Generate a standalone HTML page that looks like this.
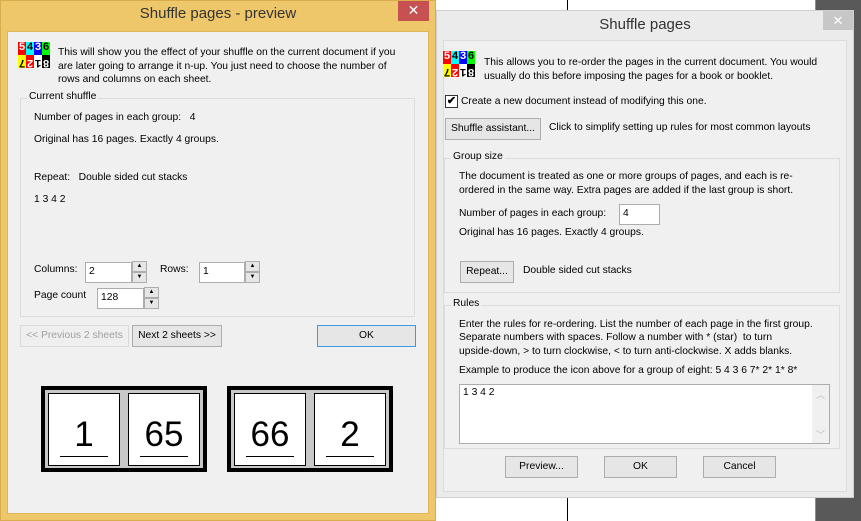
<!DOCTYPE html>
<html><head><meta charset="utf-8"><style>
*{box-sizing:border-box;margin:0;padding:0}
body{width:861px;height:521px;position:relative;overflow:hidden;background:#fff;font-family:"Liberation Sans",Arial,sans-serif;font-size:10.3px;color:#000}
.a{position:absolute;white-space:nowrap}
.btn{position:absolute;background:#e6e6e6;border:1px solid #adadad;text-align:center;line-height:20px;font-size:10.3px}
.inp{position:absolute;background:#fff;border:1px solid #abadb3;padding-left:3px;line-height:18px}
.spin{position:absolute;width:15px;background:#e6e6e6;border:1px solid #adadad;font-size:6px;text-align:center;line-height:8px}
.grp{position:absolute;border:1px solid #dcdcdc}
.grp>span{position:absolute;top:-8px;left:6px;background:#f0f0f0;padding:0 2px;font-size:10.3px}
.ic{position:absolute;width:32px;height:26px;display:grid;grid-template-columns:repeat(4,8px);grid-template-rows:13px 13px;font-weight:bold;font-size:11px;text-align:center;line-height:13px;font-family:"Liberation Mono",monospace}
.sheet{position:absolute;width:166px;height:86px;background:#c8c8c8;border:4px solid #000}
.pg{position:absolute;top:3px;width:72px;height:73px;background:#fff;border:1px solid #000;text-align:center;font-size:35px;line-height:35px;padding-top:23px}
.pg i{position:absolute;left:11px;right:11px;bottom:8px;border-top:1px solid #000}
</style></head><body>
<div class="a" style="left:567px;top:0;width:1px;height:521px;background:#000"></div>
<div class="a" style="left:815px;top:0;width:1px;height:521px;background:#3c3"></div>
<div class="a" style="left:816px;top:0;width:45px;height:521px;background:#595959"></div>

<div class="a" style="left:0;top:0;width:436px;height:521px;background:#efc76b;border:1px solid #d9ad4c"></div>
<div class="a" style="left:0;top:5px;width:436px;text-align:center;font-size:15px;color:#333">Shuffle pages - preview</div>
<div class="a" style="left:398px;top:1px;width:31px;height:20px;background:#c75050;color:#fff;text-align:center;font-size:14px;line-height:19px">✕</div>
<div class="a" style="left:7px;top:31px;width:422px;height:483px;background:#f0f0f0;border:1px solid #ddb45a"></div>
<div class="ic" style="left:18px;top:42px">
<div style="background:#f00;color:#fff">5</div><div style="background:#0ff">4</div><div style="background:#00f;color:#fff">3</div><div style="background:#0f0">6</div>
<div style="background:#ff0;transform:rotate(180deg)">7</div><div style="background:#f00;color:#fff;transform:rotate(180deg)">2</div><div style="background:#fff;transform:rotate(180deg)">1</div><div style="background:#000;color:#fff;transform:rotate(180deg)">8</div></div>
<div class="a" style="left:58px;top:46px;line-height:13.5px">This will show you the effect of your shuffle on the current document if you<br>are later going to arrange it n-up. You just need to choose the number of<br>rows and columns on each sheet.</div>
<div class="grp" style="left:20px;top:98px;width:395px;height:219px"><span>Current shuffle</span></div>
<div class="a" style="left:34px;top:112px">Number of pages in each group:&nbsp;&nbsp; 4</div>
<div class="a" style="left:34px;top:134px">Original has 16 pages. Exactly 4 groups.</div>
<div class="a" style="left:34px;top:172px">Repeat:&nbsp;&nbsp; Double sided cut stacks</div>
<div class="a" style="left:34px;top:194px">1 3 4 2</div>
<div class="a" style="left:34px;top:264px">Columns:</div>
<div class="inp" style="left:85px;top:262px;width:47px;height:21px">2</div>
<div class="spin" style="left:132px;top:261px;height:11px">▲</div><div class="spin" style="left:132px;top:272px;height:11px">▼</div>
<div class="a" style="left:160px;top:264px">Rows:</div>
<div class="inp" style="left:199px;top:262px;width:46px;height:21px">1</div>
<div class="spin" style="left:245px;top:261px;height:11px">▲</div><div class="spin" style="left:245px;top:272px;height:11px">▼</div>
<div class="a" style="left:34px;top:290px">Page count</div>
<div class="inp" style="left:97px;top:288px;width:47px;height:21px">128</div>
<div class="spin" style="left:144px;top:287px;height:11px">▲</div><div class="spin" style="left:144px;top:298px;height:11px">▼</div>
<div class="btn" style="left:20px;top:325px;width:109px;height:22px;color:#a0a0a0;background:#efefef;border-color:#d9d9d9">&lt;&lt; Previous 2 sheets</div>
<div class="btn" style="left:132px;top:325px;width:90px;height:22px">Next 2 sheets &gt;&gt;</div>
<div class="btn" style="left:317px;top:325px;width:99px;height:22px;border-color:#3c9ae8">OK</div>
<div class="sheet" style="left:41px;top:386px"><div class="pg" style="left:3px">1<i></i></div><div class="pg" style="left:83px">65<i></i></div></div>
<div class="sheet" style="left:227px;top:386px"><div class="pg" style="left:3px">66<i></i></div><div class="pg" style="left:83px">2<i></i></div></div>

<div class="a" style="left:436px;top:10px;width:418px;height:488px;background:#ebebeb;border:1px solid #cfcfcf"></div>
<div class="a" style="left:436px;top:16px;width:418px;text-align:center;font-size:15px;color:#333">Shuffle pages</div>
<div class="a" style="left:823px;top:11px;width:30px;height:19px;background:#c7c7c7;color:#fff;text-align:center;font-size:13px;line-height:19px">✕</div>
<div class="a" style="left:443px;top:40px;width:404px;height:452px;background:#f0f0f0;border:1px solid #dcdcdc"></div>
<div class="ic" style="left:443px;top:51px">
<div style="background:#f00;color:#fff">5</div><div style="background:#0ff">4</div><div style="background:#00f;color:#fff">3</div><div style="background:#0f0">6</div>
<div style="background:#ff0;transform:rotate(180deg)">7</div><div style="background:#f00;color:#fff;transform:rotate(180deg)">2</div><div style="background:#fff;transform:rotate(180deg)">1</div><div style="background:#000;color:#fff;transform:rotate(180deg)">8</div></div>
<div class="a" style="left:484px;top:56px;line-height:13.5px">This allows you to re-order the pages in the current document. You would<br>usually do this before imposing the pages for a book or booklet.</div>
<div class="a" style="left:445px;top:95px;width:13px;height:13px;border:1px solid #333;background:#fff;font-size:11px;line-height:11px;text-align:center;font-weight:bold">✔</div>
<div class="a" style="left:461px;top:96px">Create a new document instead of modifying this one.</div>
<div class="btn" style="left:445px;top:118px;width:96px;height:22px">Shuffle assistant...</div>
<div class="a" style="left:549px;top:122px">Click to simplify setting up rules for most common layouts</div>
<div class="grp" style="left:444px;top:158px;width:396px;height:135px"><span>Group size</span></div>
<div class="a" style="left:459px;top:170px;line-height:13.5px">The document is treated as one or more groups of pages, and each is re-<br>ordered in the same way. Extra pages are added if the last group is short.</div>
<div class="a" style="left:459px;top:208px">Number of pages in each group:</div>
<div class="inp" style="left:619px;top:204px;width:41px;height:21px">4</div>
<div class="a" style="left:459px;top:227px">Original has 16 pages. Exactly 4 groups.</div>
<div class="btn" style="left:460px;top:261px;width:54px;height:22px">Repeat...</div>
<div class="a" style="left:523px;top:265px">Double sided cut stacks</div>
<div class="grp" style="left:444px;top:305px;width:396px;height:144px"><span>Rules</span></div>
<div class="a" style="left:459px;top:318px;line-height:13.3px">Enter the rules for re-ordering. List the number of each page in the first group.<br>Separate numbers with spaces. Follow a number with * (star)&nbsp; to turn<br>upside-down, &gt; to turn clockwise, &lt; to turn anti-clockwise. X adds blanks.</div>
<div class="a" style="left:459px;top:365px">Example to produce the icon above for a group of eight: 5 4 3 6 7* 2* 1* 8*</div>
<div class="a" style="left:459px;top:384px;width:371px;height:60px;background:#fff;border:1px solid #abadb3;padding:2px 3px">1 3 4 2</div>
<div class="a" style="left:812px;top:385px;width:17px;height:58px;background:#f0f0f0;color:#bbb;font-size:9px;text-align:center;line-height:20px">︿<br><br>﹀</div>
<div class="btn" style="left:505px;top:456px;width:73px;height:22px">Preview...</div>
<div class="btn" style="left:604px;top:456px;width:73px;height:22px">OK</div>
<div class="btn" style="left:703px;top:456px;width:73px;height:22px">Cancel</div>
</body></html>
